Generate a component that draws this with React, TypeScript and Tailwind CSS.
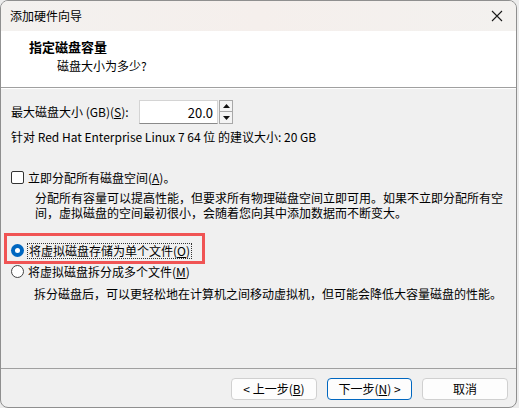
import React from "react";

const font = { fontFamily: '"Noto Sans CJK SC", "Microsoft YaHei", sans-serif' };

function Btn({ children, primary }: { children: React.ReactNode; primary?: boolean }) {
  return (
    <div
      className={
        "h-[22px] flex items-center justify-center rounded-[4px] bg-[#fdfdfd] text-[12px] text-black leading-none " +
        (primary ? "border border-[#0067c0] w-[85px]" : "border border-[#d0d0d0] w-[86px]")
      }
    >
      {children}
    </div>
  );
}

export default function App() {
  return (
    <div className="w-[519px] h-[408px] bg-[#ececec] overflow-hidden" style={font}>
      <div className="relative w-[517px] h-[408px] border border-[#8f8f8f] rounded-[8px] overflow-hidden flex flex-col bg-[#f0f0f0] text-black text-[12px]">
        {/* title bar */}
        <div className="h-[30px] shrink-0 flex items-center justify-between pl-[9px] pr-[9px] bg-gradient-to-r from-[#f3f1ef] via-[#f5efec] to-[#f3f1ef]">
          <span className="leading-none">添加硬件向导</span>
          <svg width="12" height="12" viewBox="0 0 12 12" className="mr-[4px]">
            <path d="M1 1 L11 11 M11 1 L1 11" stroke="#1a1a1a" strokeWidth="1.1" />
          </svg>
        </div>
        {/* header */}
        <div className="h-[57px] shrink-0 bg-white border-b border-[#a0a0a0] pl-[28px] pt-[7px]">
          <div className="font-bold text-[13px] leading-[18px]">指定磁盘容量</div>
          <div className="pl-[28px] leading-[15px] mt-[2px]">磁盘大小为多少?</div>
        </div>
        <div className="h-px bg-white shrink-0" />
        {/* body */}
        <div className="relative flex-1 pl-[10px] pt-[11px]">
          <div className="flex items-center h-[24px]">
            <span className="w-[128px] leading-none">
              最大磁盘大小 (GB)(<u>S</u>):
            </span>
            <div className="flex h-[24px]">
              <div className="w-[79px] h-[24px] bg-white border border-[#d4d4d4] border-b-[#8a8a8a] flex items-center justify-end pr-[4px] text-[13px] leading-none">
                20.0
              </div>
              <div className="w-[14px] h-[24px] flex flex-col ml-[1px]">
                <div className="h-[12px] border border-[#a8a8a8] bg-[#f4f4f4] flex items-center justify-center">
                  <svg width="7" height="4" viewBox="0 0 7 4"><path d="M3.5 0 L7 4 L0 4 Z" fill="#111" /></svg>
                </div>
                <div className="h-[12px] border border-t-0 border-[#a8a8a8] bg-[#f4f4f4] flex items-center justify-center">
                  <svg width="7" height="4" viewBox="0 0 7 4"><path d="M0 0 L7 0 L3.5 4 Z" fill="#111" /></svg>
                </div>
              </div>
            </div>
          </div>
          <div className="mt-[5px] leading-[15px]">针对 Red Hat Enterprise Linux 7 64 位 的建议大小: 20 GB</div>

          <div className="mt-[26px] flex items-center h-[15px]">
            <div className="w-[13px] h-[13px] border border-[#333] rounded-[2px] bg-white mr-[4px]" />
            <span className="leading-none">
              立即分配所有磁盘空间(<u>A</u>)。
            </span>
          </div>
          <div className="pl-[24px] mt-[5px] flex flex-col">
            <div className="h-[15px] leading-[15px] whitespace-nowrap">
              分配所有容量可以提高性能，但要求所有物理磁盘空间立即可用。如果不立即分配所有空
            </div>
            <div className="h-[15px] leading-[15px] whitespace-nowrap">
              间，虚拟磁盘的空间最初很小，会随着您向其中添加数据而不断变大。
            </div>
          </div>

          <div className="mt-[23px] flex items-center h-[15px]">
            <div className="w-[13px] h-[13px] rounded-full bg-[#0067c0] flex items-center justify-center mr-[3px]">
              <div className="w-[5px] h-[5px] rounded-full bg-white" />
            </div>
            <span className="leading-none border border-dotted border-[#333] px-[1px] py-[1px]">
              将虚拟磁盘存储为单个文件(<u>O</u>)
            </span>
          </div>
          <div className="mt-[6px] flex items-center h-[15px]">
            <div className="w-[13px] h-[13px] rounded-full border border-[#444] bg-white mr-[4px]" />
            <span className="leading-none">
              将虚拟磁盘拆分成多个文件(<u>M</u>)
            </span>
          </div>
          <div className="pl-[23px] mt-[7px] leading-[15px]">
            拆分磁盘后，可以更轻松地在计算机之间移动虚拟机，但可能会降低大容量磁盘的性能。
          </div>

          {/* red annotation */}
          <div className="absolute left-[3px] top-[144px] w-[201px] h-[31px] border-[3px] border-[#f05454]" />
        </div>
        {/* separator */}
        <div className="h-px bg-[#a0a0a0] shrink-0" />
        {/* footer */}
        <div className="h-[38px] shrink-0 flex items-start justify-end pt-[9px] pr-[8px] gap-[10px]">
          <Btn>
            &lt; 上一步(<u>B</u>)
          </Btn>
          <Btn primary>
            下一步(<u>N</u>) &gt;
          </Btn>
          <Btn>取消</Btn>
        </div>
      </div>
    </div>
  );
}
